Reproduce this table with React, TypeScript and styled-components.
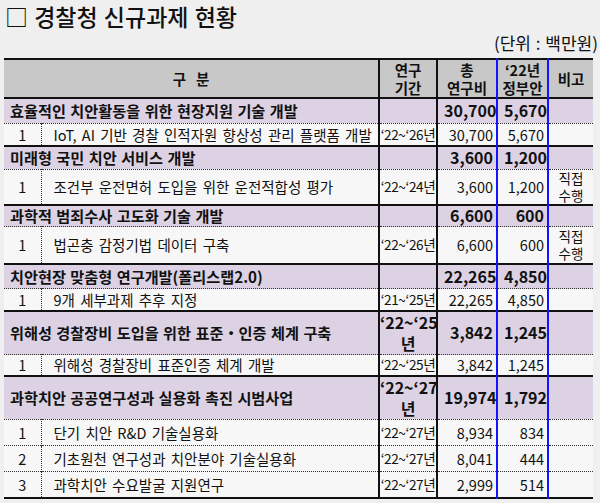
import React from 'react';
import styled, { createGlobalStyle } from 'styled-components';

const GlobalStyle = createGlobalStyle`
  body {
    margin: 0;
    background: #efefef;
    font-family: 'Noto Sans CJK KR', 'Noto Sans', sans-serif;
    color: #111;
  }
`;

const Page = styled.div`
  width: 600px;
  height: 503px;
  padding: 0 2px 0 4px;
  box-sizing: border-box;
  overflow: hidden;
`;

const Title = styled.h1`
  margin: 0;
  height: 32px;
  line-height: 32px;
  font-size: 23px;
  font-weight: 500;
  padding-left: 1px;
  word-spacing: 1px;
`;

const Unit = styled.div`
  text-align: right;
  font-size: 17px;
  line-height: 22px;
  margin-bottom: 4px;
  word-spacing: 1px;
`;

const Table = styled.table`
  width: 589px;
  border-collapse: collapse;
  table-layout: fixed;
  border-top: 2px solid #111;
  border-bottom: 2px solid #111;
`;

const blue = '#1414ff';

type Kind = 'num' | 'title' | 'period' | 'total' | 'gov' | 'remark';

const sideBorder = (kind: Kind) => {
  switch (kind) {
    case 'period':
      return 'border-left: 2px solid #111; border-right: 2px solid #111;';
    case 'gov':
      return `border-left: 2px solid ${blue}; border-right: 2px solid ${blue};`;
    default:
      return '';
  }
};

const HeadRow = styled.tr`
  height: 39px;
  background: #c8c8c8;
  border-bottom: 2px solid #111;
`;

const HeadCell = styled.th<{ kind: Kind }>`
  font-size: 14.5px;
  font-weight: 700;
  line-height: 18px;
  text-align: center;
  padding: 0;
  white-space: nowrap;
  ${(p) => sideBorder(p.kind)}
`;

const CatRow = styled.tr<{ h: number }>`
  height: ${(p) => p.h}px;
  background: #dcd2e3;
  border-top: 2px solid #111;
`;

const SubRow = styled.tr<{ h: number }>`
  height: ${(p) => p.h}px;
  background: #f7f7f7;
  border-top: 1px dotted #333;
`;

const CatCell = styled.td<{ kind: Kind }>`
  padding: 0 3px 0 6px;
  font-size: 15.2px;
  line-height: 19px;
  font-weight: 700;
  white-space: nowrap;
  word-spacing: 1px;
  text-align: ${(p) => (p.kind === 'title' ? 'left' : p.kind === 'period' ? 'center' : 'right')};
  ${(p) => (p.kind === 'total' || p.kind === 'gov' ? 'font-size: 16px; padding-right: 3px;' : '')}
  ${(p) => (p.kind === 'period' ? 'font-size: 16px; line-height: 21px; padding: 0;' : '')}
  ${(p) => sideBorder(p.kind)}
`;

const SubCell = styled.td<{ kind: Kind }>`
  font-size: 14.5px;
  line-height: 17px;
  white-space: nowrap;
  padding: 0 3px 0 0;
  word-spacing: 2px;
  text-align: ${(p) => (p.kind === 'num' || p.kind === 'remark' ? 'center' : p.kind === 'title' ? 'left' : 'right')};
  ${(p) => (p.kind === 'num' ? 'border-right: 1px dotted #333; padding: 0;' : '')}
  ${(p) => (p.kind === 'title' ? 'padding-left: 12px;' : '')}
  ${(p) => (p.kind === 'period' ? 'padding: 0; text-align: center; font-size: 13.6px; letter-spacing: -0.4px;' : '')}
  ${(p) => (p.kind === 'remark' ? 'font-size: 13.5px; line-height: 17px; white-space: normal; padding: 0;' : '')}
  ${(p) => sideBorder(p.kind)}
`;

type Sub = { no: string; name: string; period: string; total: string; gov: string; remark?: string; h: number };
type Group = { name: string; period?: string; total: string; gov: string; h: number; subs: Sub[] };

const groups: Group[] = [
  {
    name: '효율적인 치안활동을 위한 현장지원 기술 개발', total: '30,700', gov: '5,670', h: 25,
    subs: [{ no: '1', name: 'IoT, AI 기반 경찰 인적자원 향상성 관리 플랫폼 개발', period: '‘22~‘26년', total: '30,700', gov: '5,670', h: 23 }],
  },
  {
    name: '미래형 국민 치안 서비스 개발', total: '3,600', gov: '1,200', h: 23,
    subs: [{ no: '1', name: '조건부 운전면허 도입을 위한 운전적합성 평가', period: '‘22~‘24년', total: '3,600', gov: '1,200', remark: '직접 수행', h: 35 }],
  },
  {
    name: '과학적 범죄수사 고도화 기술 개발', total: '6,600', gov: '600', h: 22,
    subs: [{ no: '1', name: '법곤충 감정기법 데이터 구축', period: '‘22~‘26년', total: '6,600', gov: '600', remark: '직접 수행', h: 37 }],
  },
  {
    name: '치안현장 맞춤형 연구개발(폴리스랩2.0)', total: '22,265', gov: '4,850', h: 25,
    subs: [{ no: '1', name: '9개 세부과제 추후 지정', period: '‘21~‘25년', total: '22,265', gov: '4,850', h: 22 }],
  },
  {
    name: '위해성 경찰장비 도입을 위한 표준・인증 체계 구축', period: '‘22~‘25 년', total: '3,842', gov: '1,245', h: 44,
    subs: [{ no: '1', name: '위해성 경찰장비 표준인증 체계 개발', period: '‘22~‘25년', total: '3,842', gov: '1,245', h: 21 }],
  },
  {
    name: '과학치안 공공연구성과 실용화 촉진 시범사업', period: '‘22~‘27 년', total: '19,974', gov: '1,792', h: 43,
    subs: [
      { no: '1', name: '단기 치안 R&D 기술실용화', period: '‘22~‘27년', total: '8,934', gov: '834', h: 26 },
      { no: '2', name: '기초원천 연구성과 치안분야 기술실용화', period: '‘22~‘27년', total: '8,041', gov: '444', h: 26 },
      { no: '3', name: '과학치안 수요발굴 지원연구', period: '‘22~‘27년', total: '2,999', gov: '514', h: 27 },
    ],
  },
];

export default function App() {
  return (
    <Page>
      <GlobalStyle />
      <Title>□ 경찰청 신규과제 현황</Title>
      <Unit>(단위 : 백만원)</Unit>
      <Table>
        <colgroup>
          <col style={{ width: 37 }} />
          <col style={{ width: 338 }} />
          <col style={{ width: 58 }} />
          <col style={{ width: 60 }} />
          <col style={{ width: 51 }} />
          <col style={{ width: 45 }} />
        </colgroup>
        <thead>
          <HeadRow>
            <HeadCell kind="title" colSpan={2}>구&nbsp;&nbsp;&nbsp;분</HeadCell>
            <HeadCell kind="period">연구<br />기간</HeadCell>
            <HeadCell kind="total">총<br />연구비</HeadCell>
            <HeadCell kind="gov">‘22년<br />정부안</HeadCell>
            <HeadCell kind="remark">비고</HeadCell>
          </HeadRow>
        </thead>
        <tbody>
          {groups.map((g, gi) => (
            <React.Fragment key={gi}>
              <CatRow h={g.h}>
                <CatCell kind="title" colSpan={2}>{g.name}</CatCell>
                <CatCell kind="period">
                  {g.period ? <>{g.period.split(' ')[0]}<br />{g.period.split(' ')[1]}</> : null}
                </CatCell>
                <CatCell kind="total">{g.total}</CatCell>
                <CatCell kind="gov">{g.gov}</CatCell>
                <CatCell kind="remark" />
              </CatRow>
              {g.subs.map((s, si) => (
                <SubRow key={si} h={s.h}>
                  <SubCell kind="num">{s.no}</SubCell>
                  <SubCell kind="title">{s.name}</SubCell>
                  <SubCell kind="period">{s.period}</SubCell>
                  <SubCell kind="total">{s.total}</SubCell>
                  <SubCell kind="gov">{s.gov}</SubCell>
                  <SubCell kind="remark">
                    {s.remark ? <>{s.remark.split(' ')[0]}<br />{s.remark.split(' ')[1]}</> : null}
                  </SubCell>
                </SubRow>
              ))}
            </React.Fragment>
          ))}
        </tbody>
      </Table>
    </Page>
  );
}
